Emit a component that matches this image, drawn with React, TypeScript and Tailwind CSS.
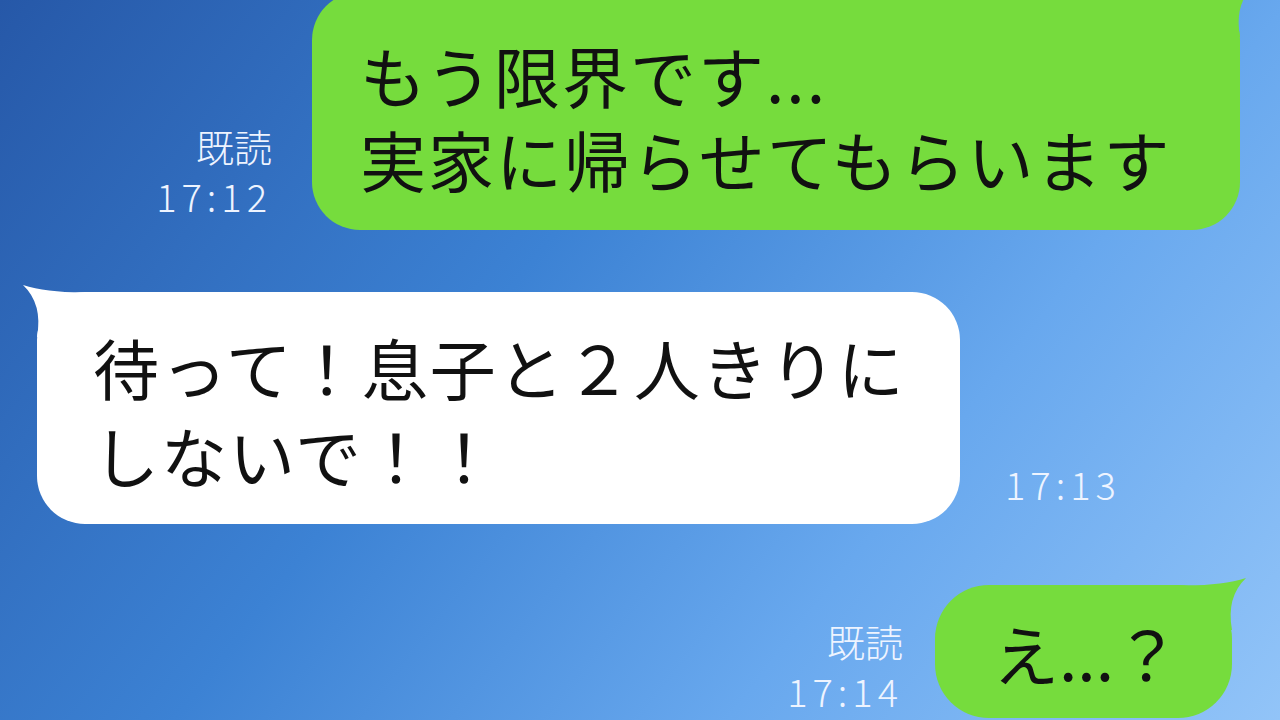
import React from "react";

const GREEN = "#76dc3d";

function TailRight({ color }: { color: string }) {
  // tail sticking out of the top right corner
  return (
    <svg
      className="absolute -top-[10px] -right-[20px]"
      width="90"
      height="60"
      viewBox="0 0 90 60"
    >
      <path d="M8 10 Q56 12 84 3 Q64 22 70 55 L8 55 Z" fill={color} />
    </svg>
  );
}

function TailLeft({ color }: { color: string }) {
  return (
    <svg
      className="absolute -top-[10px] -left-[20px]"
      width="90"
      height="60"
      viewBox="0 0 90 60"
    >
      <path d="M82 10 Q34 12 6 3 Q26 22 20 55 L82 55 Z" fill={color} />
    </svg>
  );
}

function Meta({ read, time, className }: { read?: boolean; time: string; className?: string }) {
  return (
    <div className={`flex flex-col items-end text-[38px] leading-[50px] text-[#eef4ff] font-light ${className ?? ""}`}>
      {read && <span>既読</span>}
      <span className="tracking-[5px]">{time}</span>
    </div>
  );
}

export default function App() {
  return (
    <div className="relative w-[1280px] h-[720px] overflow-hidden bg-[linear-gradient(128deg,#2658a8_0%,#3c82d4_40%,#68a8ee_70%,#92c4f8_100%)] font-['Noto_Sans_CJK_JP','Noto_Sans',sans-serif]">
      <div className="flex flex-col -mt-[8px]">
        {/* row 1 */}
        <div className="flex justify-end items-end gap-[40px] pr-[40px]">
          <Meta read time="17:12" className="mb-[9px]" />
          <div
            className="relative w-[928px] rounded-[48px] pt-[40px] pb-[30px] pl-[48px] text-[66px] leading-[84px] tracking-[2px] font-normal text-[#111]"
            style={{ backgroundColor: GREEN }}
          >
            <TailRight color={GREEN} />
            <div className="relative">もう限界です...</div>
            <div className="relative">実家に帰らせてもらいます</div>
          </div>
        </div>

        {/* row 2 */}
        <div className="flex items-end gap-[45px] pl-[37px] mt-[62px]">
          <div className="relative w-[923px] rounded-[48px] bg-white pt-[30px] pb-[26px] pl-[56px] text-[66px] leading-[88px] tracking-[2px] font-normal text-[#111]">
            <TailLeft color="#ffffff" />
            <div className="relative">待って！息子と２人きりに</div>
            <div className="relative">しないで！！</div>
          </div>
          <Meta time="17:13" className="mb-[15px]" />
        </div>

        {/* row 3 */}
        <div className="flex justify-end items-end gap-[32px] pr-[48px] mt-[61px]">
          <Meta read time="17:14" className="mb-[2px]" />
          <div
            className="relative w-[297px] h-[133px] rounded-[54px] pl-[58px] flex items-center text-[66px] leading-[82px] font-normal text-[#111]"
            style={{ backgroundColor: GREEN }}
          >
            <TailRight color={GREEN} />
            <span className="relative">え...？</span>
          </div>
        </div>
      </div>
    </div>
  );
}
